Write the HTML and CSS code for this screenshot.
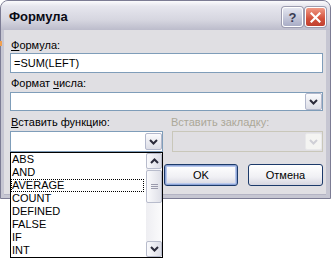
FILE: index.html
```html
<!DOCTYPE html>
<html lang="ru">
<head>
    <meta charset="UTF-8">
    <title>Формула</title>
    <link rel="stylesheet" href="styles.css">
</head>
<body>

<div class="window">
    <div class="titlebar">
        <span class="title">Формула</span>
        <div class="caption-btns">
            <span class="cbtn help">?</span>
            <span class="cbtn close">
                <svg width="11" height="11" viewBox="0 0 11 11"><path d="M1.5 1.5 L9.5 9.5 M9.5 1.5 L1.5 9.5" stroke="#fff" stroke-width="2.2" stroke-linecap="square"/></svg>
            </span>
        </div>
    </div>

    <div class="client">
        <span class="label"><u>Ф</u>ормула:</span>
        <div class="textbox">=SUM(LEFT)</div>

        <span class="label gap">Формат <u>ч</u>исла:</span>
        <div class="combo wide">
            <span class="drop"><svg width="9" height="6" viewBox="0 0 9 6"><polyline points="1,1 4.5,4.5 8,1" fill="none" stroke="#2b2b3a" stroke-width="2"/></svg></span>
        </div>

        <div class="row">
            <div class="col-left">
                <span class="label"><u>В</u>ставить функцию:</span>
                <div class="combo tall">
                    <span class="drop"><svg width="9" height="6" viewBox="0 0 9 6"><polyline points="1,1 4.5,4.5 8,1" fill="none" stroke="#2b2b3a" stroke-width="2"/></svg></span>
                </div>
            </div>
            <div class="col-right">
                <span class="label disabled">Вставить закладку:</span>
                <div class="combo tall off">
                    <span class="drop"><svg width="9" height="6" viewBox="0 0 9 6"><polyline points="1,1 4.5,4.5 8,1" fill="none" stroke="#cfcfd6" stroke-width="2"/></svg></span>
                </div>
                <div class="buttons">
                    <button class="btn default">OK</button>
                    <button class="btn">Отмена</button>
                </div>
            </div>
        </div>
    </div>
</div>

<div class="speck"></div>

<div class="dropdown">
    <ul class="items">
        <li>ABS</li>
        <li>AND</li>
        <li class="focus">AVERAGE</li>
        <li>COUNT</li>
        <li>DEFINED</li>
        <li>FALSE</li>
        <li>IF</li>
        <li>INT</li>
    </ul>
    <div class="scrollbar">
        <span class="sbtn"><svg width="9" height="6" viewBox="0 0 9 6"><polyline points="1,5 4.5,1.5 8,5" fill="none" stroke="#2b2b3a" stroke-width="2"/></svg></span>
        <span class="thumb"><span class="grip"></span></span>
        <span class="track"></span>
        <span class="sbtn"><svg width="9" height="6" viewBox="0 0 9 6"><polyline points="1,1 4.5,4.5 8,1" fill="none" stroke="#2b2b3a" stroke-width="2"/></svg></span>
    </div>
</div>

</body>
</html>
```

FILE: styles.css
```css
html {
    background: #fff;
}
body {
    margin: 0;
    min-height: 259px;
    background: #fff;
    font-family: "Liberation Sans", Arial, sans-serif;
    font-size: 11px;
    color: #000;
    position: relative;
}
.window {
    width: 331px;
    box-sizing: border-box;
    border: 1px solid #7c7c94;
    border-radius: 8px 8px 0 0;
    background: #c6c6d2;
}
.titlebar {
    height: 29px;
    border-radius: 7px 7px 0 0;
    background: linear-gradient(#fbfbfd 0%, #e6e6ee 18%, #d6d6e0 65%, #bcbccb 100%);
    display: flex;
    align-items: center;
    justify-content: space-between;
    padding: 0 4px 0 8px;
}
.title {
    font-weight: bold;
    font-size: 13px;
    color: #0a0a14;
    margin-top: 1px;
}
.caption-btns {
    display: flex;
    gap: 2px;
    margin-top: 3px;
}
.cbtn {
    width: 19px;
    height: 18px;
    border: 1px solid #fff;
    border-radius: 3px;
    display: flex;
    align-items: center;
    justify-content: center;
    box-shadow: 0 0 0 1px #9c9cb0;
}
.help {
    background: linear-gradient(#e4e6f0, #a9adc6);
    color: #3a3a52;
    font-weight: bold;
    font-size: 13px;
}
.close {
    background: linear-gradient(#f09a86, #d2503a 60%, #c04030);
}
.client {
    margin: 0 4px 3px 3px;
    background: #e0dfe3;
    padding: 9px 3px 8px 6px;
    border-bottom: 1px solid #b4b4c4;
}
.label {
    display: block;
    height: 13px;
    line-height: 13px;
    padding-left: 1px;
}
.label.gap {
    margin-top: 4px;
}
.label.disabled {
    color: #aca899;
    padding-left: 7px;
}
.textbox {
    margin-top: 1px;
    height: 20px;
    box-sizing: border-box;
    border: 1px solid #7f9db9;
    background: #fff;
    padding: 3px 0 0 3px;
    line-height: 13px;
}
.combo {
    box-sizing: border-box;
    border: 1px solid #7f9db9;
    background: #fff;
    display: flex;
    justify-content: flex-end;
    margin-top: 2px;
}
.combo.wide {
    height: 19px;
}
.combo.tall {
    height: 21px;
    padding: 1px 0;
}
.combo.off {
    margin-left: 8px;
    border-color: #c9c7ba;
    background: #e0dfe3;
}
.drop {
    width: 17px;
    height: 17px;
    box-sizing: border-box;
    border: 1px solid #b3b8cc;
    border-radius: 2px;
    background: linear-gradient(#fbfbfd, #dcdde6);
    display: flex;
    align-items: center;
    justify-content: center;
}
.off .drop {
    border-color: #e8e8ea;
    background: #f4f4f2;
}
.row {
    display: flex;
    margin-top: 5px;
}
.col-left {
    width: 154px;
}
.col-left .combo {
    width: 153px;
}
.col-right {
    flex: 1;
}
.buttons {
    display: flex;
    gap: 10px;
    margin-top: 12px;
}
.btn {
    width: 74px;
    height: 22px;
    box-sizing: border-box;
    border: 1px solid #1c3a6a;
    border-radius: 3px;
    background: linear-gradient(#ffffff, #f0f0f4 60%, #d6d6e0);
    font-family: "Liberation Sans", Arial, sans-serif;
    font-size: 11px;
    color: #000;
    padding: 0;
}
.btn + .btn {
    width: 75px;
}
.btn.default {
    box-shadow: inset 0 0 0 1px #8ea4d6, inset 0 0 0 2px #b8c8ec;
}
.speck {
    position: absolute;
    left: 0;
    top: 41px;
    width: 2px;
    height: 5px;
    background: #f0a050;
}
.dropdown {
    position: absolute;
    left: 10px;
    top: 152px;
    width: 153px;
    height: 106px;
    box-sizing: border-box;
    border: 1px solid #000;
    background: #fff;
    display: flex;
}
.items {
    list-style: none;
    margin: 0;
    padding: 0;
    flex: 1;
}
.items li {
    height: 13px;
    line-height: 13px;
    padding-left: 1px;
}
.items li.focus {
    outline: 1px dotted #000;
    outline-offset: -1px;
    margin-right: 2px;
}
.scrollbar {
    width: 16px;
    display: flex;
    flex-direction: column;
    background: linear-gradient(to right, #eeeef2, #fbfbfc);
}
.sbtn {
    height: 16px;
    box-sizing: border-box;
    border: 1px solid #b8bccc;
    border-radius: 2px;
    background: linear-gradient(to right, #fafafc, #dcdde6);
    display: flex;
    align-items: center;
    justify-content: center;
}
.thumb {
    margin-top: 1px;
    height: 33px;
    box-sizing: border-box;
    border: 1px solid #b8bccc;
    border-radius: 2px;
    background: linear-gradient(to right, #fafafc, #dfe0e8);
    display: flex;
    align-items: center;
    justify-content: center;
}
.grip {
    width: 7px;
    height: 5px;
    background: repeating-linear-gradient(#9a9aac 0 1px, transparent 1px 2px);
}
.track {
    flex: 1;
}
```
